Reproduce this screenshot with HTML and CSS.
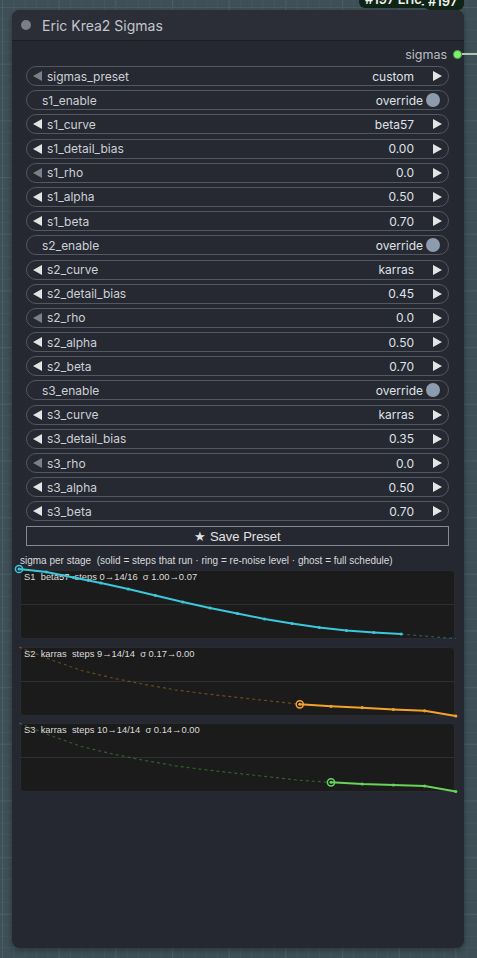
FILE: index.html
```html
<!DOCTYPE html>
<html lang="en">
<head>
    <meta charset="UTF-8">
    <meta name="viewport" content="width=device-width, initial-scale=1.0">
    <title>Eric Krea2 Sigmas</title>
    <link rel="stylesheet" href="styles.css">
</head>
<body>
    <div class="canvas">
        <div class="badge badge-title">#197 Eric_</div>
        <div class="badge badge-id">#197</div>
        <div class="wire"></div>

        <div class="node">
            <div class="node-title">
                <span class="node-dot"></span>
                <span class="node-name">Eric Krea2 Sigmas</span>
            </div>

            <div class="node-body">
                <div class="output-row">
                    <span class="output-name">sigmas</span>
                    <span class="slot-dot"></span>
                </div>

                <div class="widgets">
                    <div class="widget"><span class="arrow left dim"></span><span class="w-label">sigmas_preset</span><span class="w-value">custom</span><span class="arrow right"></span></div>
                    <div class="widget toggle"><span class="w-label">s1_enable</span><span class="w-value">override</span><span class="knob"></span></div>
                    <div class="widget"><span class="arrow left"></span><span class="w-label">s1_curve</span><span class="w-value">beta57</span><span class="arrow right"></span></div>
                    <div class="widget"><span class="arrow left"></span><span class="w-label">s1_detail_bias</span><span class="w-value">0.00</span><span class="arrow right"></span></div>
                    <div class="widget"><span class="arrow left dim"></span><span class="w-label">s1_rho</span><span class="w-value">0.0</span><span class="arrow right"></span></div>
                    <div class="widget"><span class="arrow left"></span><span class="w-label">s1_alpha</span><span class="w-value">0.50</span><span class="arrow right"></span></div>
                    <div class="widget"><span class="arrow left"></span><span class="w-label">s1_beta</span><span class="w-value">0.70</span><span class="arrow right"></span></div>
                    <div class="widget toggle"><span class="w-label">s2_enable</span><span class="w-value">override</span><span class="knob"></span></div>
                    <div class="widget"><span class="arrow left"></span><span class="w-label">s2_curve</span><span class="w-value">karras</span><span class="arrow right"></span></div>
                    <div class="widget"><span class="arrow left"></span><span class="w-label">s2_detail_bias</span><span class="w-value">0.45</span><span class="arrow right"></span></div>
                    <div class="widget"><span class="arrow left dim"></span><span class="w-label">s2_rho</span><span class="w-value">0.0</span><span class="arrow right"></span></div>
                    <div class="widget"><span class="arrow left"></span><span class="w-label">s2_alpha</span><span class="w-value">0.50</span><span class="arrow right"></span></div>
                    <div class="widget"><span class="arrow left"></span><span class="w-label">s2_beta</span><span class="w-value">0.70</span><span class="arrow right"></span></div>
                    <div class="widget toggle"><span class="w-label">s3_enable</span><span class="w-value">override</span><span class="knob"></span></div>
                    <div class="widget"><span class="arrow left"></span><span class="w-label">s3_curve</span><span class="w-value">karras</span><span class="arrow right"></span></div>
                    <div class="widget"><span class="arrow left"></span><span class="w-label">s3_detail_bias</span><span class="w-value">0.35</span><span class="arrow right"></span></div>
                    <div class="widget"><span class="arrow left dim"></span><span class="w-label">s3_rho</span><span class="w-value">0.0</span><span class="arrow right"></span></div>
                    <div class="widget"><span class="arrow left"></span><span class="w-label">s3_alpha</span><span class="w-value">0.50</span><span class="arrow right"></span></div>
                    <div class="widget"><span class="arrow left"></span><span class="w-label">s3_beta</span><span class="w-value">0.70</span><span class="arrow right"></span></div>
                </div>

                <button class="save-btn">&#9733; Save Preset</button>

                <div class="chart-caption">sigma per stage&nbsp; (solid = steps that run · ring = re-noise level · ghost = full schedule)</div>

                <div class="charts">
                    <div class="chart">
                        <svg viewBox="0 0 435 69" width="435" height="69">
                            <line class="midline" x1="0" y1="34.5" x2="435" y2="34.5"/>
                            <text class="chart-label" x="4" y="10">S1&nbsp; beta57&nbsp; steps 0→14/16&nbsp; σ 1.00→0.07</text>
                            <polyline class="ghost s1" points="381.2,64 408.5,66.5 435.8,68.5"/>
                            <polyline class="solid s1" points="-1,-1 26.3,2 53.6,7.5 80.9,13 108.2,19 135.5,25.5 162.8,32 190,38 217.4,43.5 244.7,49 272,53.5 299.3,57.5 326.6,60.5 353.9,62.5 381.2,64"/>
                            <g class="dots s1">
                                <circle cx="26.3" cy="2" r="1.6"/><circle cx="53.6" cy="7.5" r="1.6"/><circle cx="80.9" cy="13" r="1.6"/>
                                <circle cx="108.2" cy="19" r="1.6"/><circle cx="135.5" cy="25.5" r="1.6"/><circle cx="162.8" cy="32" r="1.6"/>
                                <circle cx="190" cy="38" r="1.6"/><circle cx="217.4" cy="43.5" r="1.6"/><circle cx="244.7" cy="49" r="1.6"/>
                                <circle cx="272" cy="53.5" r="1.6"/><circle cx="299.3" cy="57.5" r="1.6"/><circle cx="326.6" cy="60.5" r="1.6"/>
                                <circle cx="353.9" cy="62.5" r="1.6"/><circle cx="381.2" cy="64" r="1.6"/>
                            </g>
                            <circle class="ring s1" cx="-1" cy="-1" r="3.6"/>
                            <circle class="ring-core s1" cx="-1" cy="-1" r="1.5"/>
                        </svg>
                    </div>

                    <div class="chart">
                        <svg viewBox="0 0 435 69" width="435" height="69">
                            <line class="midline" x1="0" y1="34.5" x2="435" y2="34.5"/>
                            <text class="chart-label" x="4" y="10">S2&nbsp; karras&nbsp; steps 9→14/14&nbsp; σ 0.17→0.00</text>
                            <polyline class="ghost s2" points="-1,0 30.2,12.4 61.4,23.5 92.6,31 123.8,37.3 155,42.8 186.2,46.9 217.4,50.4 248.6,53.8 279.8,57.3"/>
                            <polyline class="solid s2" points="279.8,57.3 311,59.3 342.2,60.7 373.4,62.5 404.6,63.8 435.8,69"/>
                            <g class="dots s2">
                                <circle cx="311" cy="59.3" r="1.6"/><circle cx="342.2" cy="60.7" r="1.6"/><circle cx="373.4" cy="62.5" r="1.6"/>
                                <circle cx="404.6" cy="63.8" r="1.6"/><circle cx="435.8" cy="69" r="1.6"/>
                            </g>
                            <circle class="ring s2" cx="279.8" cy="57.3" r="3.6"/>
                            <circle class="ring-core s2" cx="279.8" cy="57.3" r="1.5"/>
                        </svg>
                    </div>

                    <div class="chart">
                        <svg viewBox="0 0 435 69" width="435" height="69">
                            <line class="midline" x1="0" y1="34.5" x2="435" y2="34.5"/>
                            <text class="chart-label" x="4" y="10">S3&nbsp; karras&nbsp; steps 10→14/14&nbsp; σ 0.14→0.00</text>
                            <polyline class="ghost s3" points="-1,0 30.2,12.4 61.4,23.5 92.6,31 123.8,37.3 155,42.8 186.2,46.9 217.4,50.4 248.6,53.8 279.8,57.3 311,59.3"/>
                            <polyline class="solid s3" points="311,59.3 342.2,61 373.4,62 404.6,63 435.8,68.5"/>
                            <g class="dots s3">
                                <circle cx="342.2" cy="61" r="1.6"/><circle cx="373.4" cy="62" r="1.6"/>
                                <circle cx="404.6" cy="63" r="1.6"/><circle cx="435.8" cy="68.5" r="1.6"/>
                            </g>
                            <circle class="ring s3" cx="311" cy="59.3" r="3.6"/>
                            <circle class="ring-core s3" cx="311" cy="59.3" r="1.5"/>
                        </svg>
                    </div>
                </div>
            </div>
        </div>
    </div>
</body>
</html>
```

FILE: styles.css
```css
* {
    margin: 0;
    padding: 0;
    box-sizing: border-box;
}

body {
    font-family: Inter, 'Noto Sans', sans-serif;
    background: #3e4f57;
    width: 477px;
    height: 958px;
    overflow: hidden;
}

.canvas {
    position: relative;
    width: 477px;
    height: 958px;
    padding: 10px 0 0 12px;
    background-color: #3e4f57;
    background-image:
        linear-gradient(#4a5c64 1px, transparent 1px),
        linear-gradient(90deg, #4a5c64 1px, transparent 1px),
        linear-gradient(rgba(255,255,255,0.035) 1px, transparent 1px),
        linear-gradient(90deg, rgba(255,255,255,0.035) 1px, transparent 1px);
    background-size: 56.7px 56.7px, 56.7px 56.7px, 11.34px 11.34px, 11.34px 11.34px;
    background-position: 2px 7px, 2px 7px, 2px 7px, 2px 7px;
}

/* id badges peeking over the top edge */
.badge {
    position: absolute;
    top: -8px;
    height: 16px;
    background: #0f2414;
    color: #f2f2f2;
    font-size: 13px;
    font-weight: 600;
    line-height: 14px;
    border-radius: 0 0 6px 6px;
    padding: 0 6px;
}

.badge-title {
    left: 359px;
    width: 80px;
}

.badge-id {
    left: 424px;
    width: 40px;
    padding: 0 4px;
    border-radius: 6px;
    top: -6px;
}

.wire {
    position: absolute;
    left: 462px;
    top: 53px;
    width: 15px;
    height: 2px;
    background: #b7c5ae;
}

/* node */
.node {
    width: 452px;
    height: 938px;
    background: #252831;
    border-radius: 8px;
    box-shadow: 0 2px 6px rgba(0,0,0,0.35);
    overflow: hidden;
}

.node-title {
    height: 31px;
    display: flex;
    align-items: center;
    padding-left: 9px;
    background: #2b2e37;
    border-bottom: 1px solid #1c1e24;
}

.node-dot {
    width: 10px;
    height: 10px;
    border-radius: 50%;
    background: #7b7e87;
    margin-right: 11px;
}

.node-name {
    font-size: 14px;
    color: #c3c6cd;
}

.node-body {
    padding: 0 15px 0 14px;
}

.output-row {
    height: 24px;
    display: flex;
    align-items: center;
    justify-content: flex-end;
    padding-top: 2px;
    margin-right: -13px;
}

.output-name {
    font-size: 12.5px;
    color: #b9bcc3;
    margin-right: 6px;
}

.slot-dot {
    width: 9px;
    height: 9px;
    border-radius: 50%;
    background: #7cf46f;
    border: 1px solid #4ca145;
}

/* widgets */
.widgets {
    display: flex;
    flex-direction: column;
    gap: 4.2px;
    margin-top: 1px;
}

.widget {
    height: 20px;
    display: flex;
    align-items: center;
    padding: 0 6px 0 6px;
    background: #262931;
    border: 1px solid #535761;
    border-radius: 10px;
    font-size: 12px;
}

.w-label {
    flex: 1;
    color: #ccd0d6;
    margin-left: 5px;
}

.w-value {
    color: #dfe2e7;
    margin-right: 19px;
}

.arrow {
    width: 0;
    height: 0;
    border-top: 5px solid transparent;
    border-bottom: 5px solid transparent;
}

.arrow.left {
    border-right: 9px solid #e4e4e6;
}

.arrow.left.dim {
    border-right-color: #7c7f87;
}

.arrow.right {
    border-left: 9px solid #e4e4e6;
}

.widget.toggle {
    padding: 0 8px 0 10px;
}

.widget.toggle .w-value {
    margin-right: 3px;
}

.knob {
    width: 14px;
    height: 14px;
    border-radius: 50%;
    background: #8c9bae;
}

.save-btn {
    display: block;
    width: 423px;
    height: 20px;
    margin-top: 5px;
    background: #252830;
    border: 1px solid #868991;
    color: #e2e2e2;
    font-family: 'Liberation Sans', Arial, sans-serif;
    font-size: 13px;
}

.chart-caption {
    font-family: 'Liberation Sans', Arial, sans-serif;
    font-size: 10px;
    color: #dadada;
    margin: 7px 0 0 -6px;
    height: 16px;
    line-height: 16px;
    white-space: nowrap;
}

/* sigma charts */
.charts {
    display: flex;
    flex-direction: column;
    gap: 7.5px;
    margin: 1px 0 0 -6px;
}

.chart {
    width: 435px;
    height: 69px;
    background: #1b1b1c;
    border: 1px solid #2a2b2d;
    border-radius: 4px;
}

.chart svg {
    display: block;
    overflow: visible;
    margin: -1px 0 0 -1px;
}

.midline {
    stroke: #2e2f31;
    stroke-width: 1;
}

.chart-label {
    font-family: 'Liberation Sans', Arial, sans-serif;
    font-size: 9.4px;
    fill: #dcdcdc;
}

.solid {
    fill: none;
    stroke-width: 2;
    stroke-linejoin: round;
}

.ghost {
    fill: none;
    stroke-width: 1.2;
    stroke-dasharray: 3 3;
}

.ring {
    fill: none;
    stroke-width: 1.5;
}

.solid.s1, .ring.s1 { stroke: #3cc8dc; }
.dots.s1, .ring-core.s1 { fill: #3cc8dc; }
.ghost.s1 { stroke: rgba(60, 200, 220, 0.35); }

.solid.s2, .ring.s2 { stroke: #f3a32a; }
.dots.s2, .ring-core.s2 { fill: #f3a32a; }
.ghost.s2 { stroke: rgba(243, 163, 42, 0.35); }

.solid.s3, .ring.s3 { stroke: #68d35a; }
.dots.s3, .ring-core.s3 { fill: #68d35a; }
.ghost.s3 { stroke: rgba(104, 211, 90, 0.35); }
```
